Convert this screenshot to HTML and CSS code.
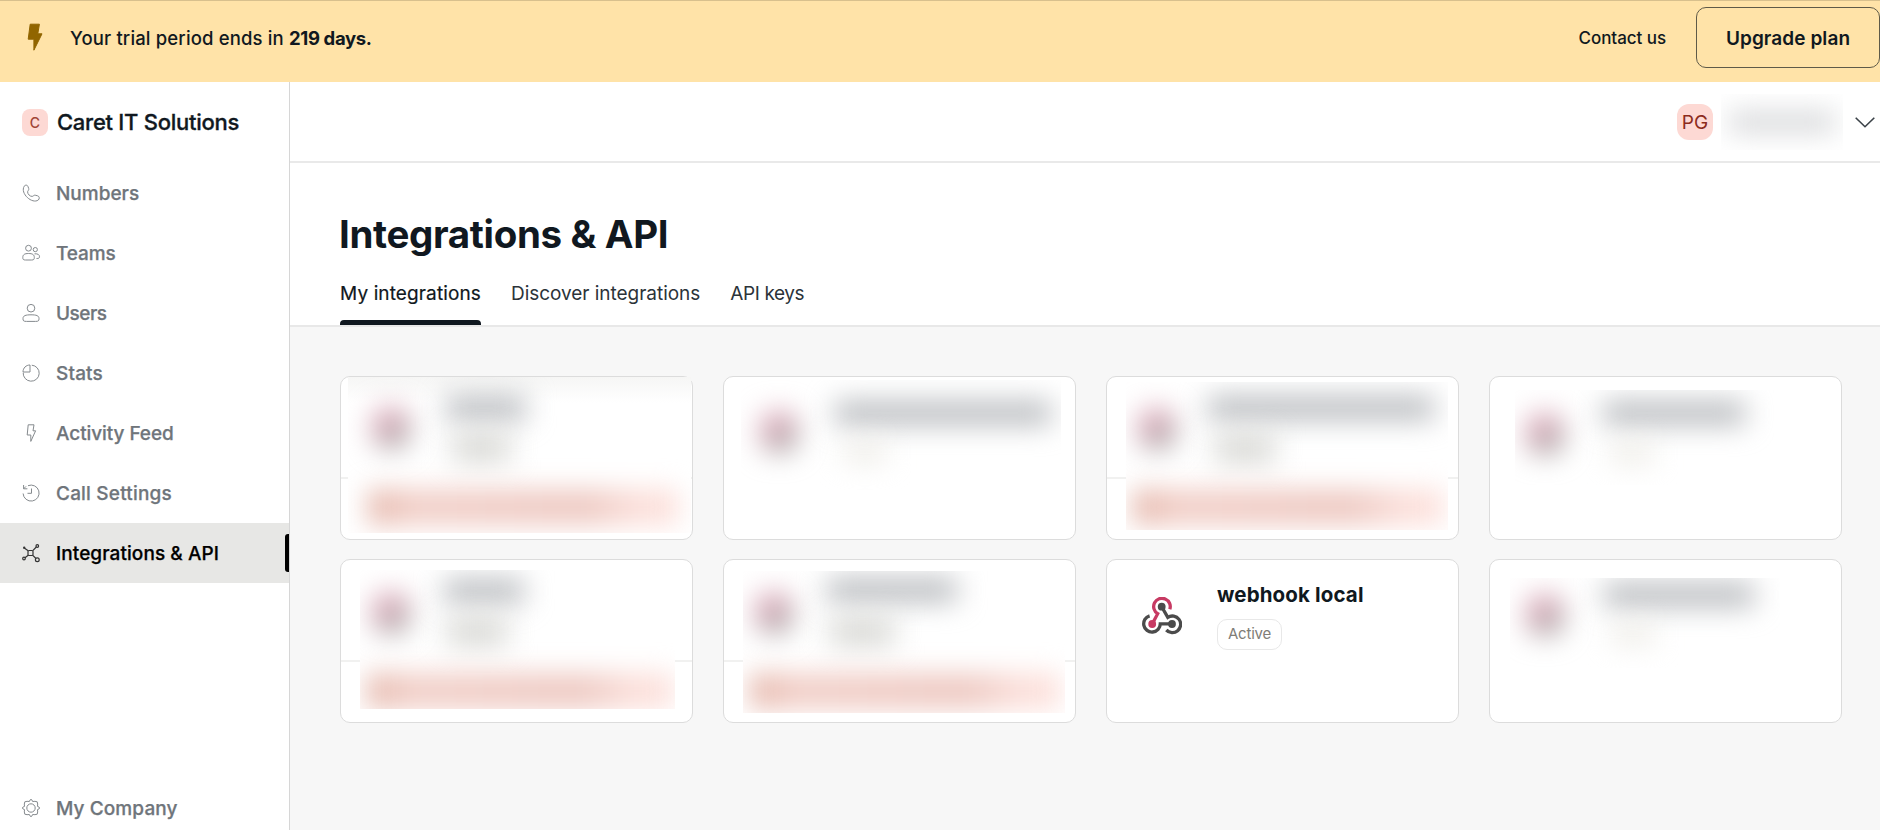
FILE: index.html
```html
<!DOCTYPE html>
<html lang="en">
<head>
<meta charset="utf-8">
<title>Integrations &amp; API</title>
<link rel="stylesheet" href="styles.css">
</head>
<body>
<div class="app">
  <div class="banner">
    <svg class="banner-icon" width="16" height="28" viewBox="0 0 16 28"><path d="M3.2 1.2h9.2l-1.6 9.6h4.2L6.9 27.2V16.2H1.2z" fill="#916500" stroke="#916500" stroke-width="1" stroke-linejoin="round"/></svg>
    <p class="banner-text">Your trial period ends in <strong>219 days.</strong></p>
    <a class="contact">Contact us</a>
    <button class="upgrade">Upgrade plan</button>
  </div>
  <div class="body">
    <aside class="sidebar">
      <div class="company"><span class="company-badge">C</span><span class="company-name">Caret IT Solutions</span></div>
      <nav class="nav">
        <a class="nav-item"><svg class="icon" viewBox="0 0 18 18"><path d="M2.200 2.200C3.400.6 5.400.8 6 2.600L6.700 4.500C7.200 6 5.700 6.700 5.600 7.800C5.500 10 8 12.600 10.200 12.400C11.400 12.300 11.800 10.900 13.200 11.200L15.600 11.800C17.700 12.400 17.700 14.800 16.300 16C10.400 20.500-2.200 9.500 2.200 2.200Z"/></svg>Numbers</a>
        <a class="nav-item teams"><svg class="icon" viewBox="0 0 18 18"><circle cx="6.500" cy="4.200" r="2.900"/><circle cx="13.300" cy="5.600" r="2.100"/><path d="M.8 13.500C.8 10.600 2.500 9.500 6.500 9.500S12.300 10.600 12.300 13.500C12.300 15.400 11.800 16 9.500 16H3.500C1.300 16 .8 15.400.8 13.500ZM12.500 9.800C16 9.600 17.500 10.700 17.500 12.800C17.500 14.200 16.700 14.500 14.500 14.500"/></svg>Teams</a>
        <a class="nav-item users"><svg class="icon" viewBox="0 0 18 18"><circle cx="9" cy="4.200" r="3.800"/><path d="M1 14.500C1 11.700 3.500 10.800 9 10.800S17 11.700 17 14.500C17 16.900 16.500 17.400 13.500 17.400H4.500C1.500 17.400 1 16.900 1 14.500Z"/></svg>Users</a>
        <a class="nav-item stats"><svg class="icon" viewBox="0 0 18 18"><path d="M9.800 1.200A8 8 0 1 1 1.200 8.700M8 1V8H1C1 4 4 1 8 1Z"/></svg>Stats</a>
        <a class="nav-item feed"><svg class="icon" viewBox="0 0 18 18"><path d="M6.200.8H12L11 6.800H13.600L8.800 17.400V11H5.200Z"/></svg>Activity Feed</a>
        <a class="nav-item settings"><svg class="icon" viewBox="0 0 18 18"><path d="M6 1.700A8 8 0 1 1 1.100 9.500M1.600 1V4.800H5.400M1.600 4.800L4 2.400M9.500 4.500V9.300H5.500"/></svg>Call Settings</a>
        <a class="nav-item active"><svg class="icon" viewBox="0 0 18 18"><rect x="6" y="6.500" width="5" height="5" rx="1"/><circle cx="15.300" cy="2" r="1.300"/><circle cx="15.300" cy="15.800" r="1.900"/><circle cx="2" cy="14.500" r="1.300"/><circle cx="2.200" cy="3.800" r=".6"/><path d="M2.600 4.200L6.200 6.800M14.300 3L10.800 6.700M6.200 11.300L3 13.700M10.800 11.300L14 14.500"/></svg>Integrations &amp; API</a>
      </nav>
      <a class="nav-item my-company"><svg class="icon" viewBox="0 0 18 18"><path d="M9 .3Q10 .5 10.600 2.500Q13 2 15.200 2.800Q16 5 15.500 7.400Q17.500 8 17.700 9Q17.500 10 15.500 10.600Q16 13 15.200 15.200Q13 16 10.600 15.500Q10 17.500 9 17.700Q8 17.500 7.400 15.500Q5 16 2.800 15.200Q2 13 2.500 10.600Q.5 10 .3 9Q.5 8 2.500 7.400Q2 5 2.800 2.800Q5 2 7.400 2.500Q8 .5 9 .3Z"/><circle cx="9" cy="9" r="4.200"/></svg>My Company</a>
    </aside>
    <main class="main">
      <header class="topbar">
        <span class="avatar">PG</span>
        <span class="user-name"><i class="smudge name"></i></span>
        <svg class="chevron" width="20" height="11" viewBox="0 0 20 11"><path d="M.7.700L10 9.700L19.300.700"/></svg>
      </header>
      <section class="heading">
        <h1>Integrations &amp; API</h1>
        <div class="tabs"><a class="tab selected">My integrations</a><a class="tab">Discover integrations</a><a class="tab keys">API keys</a></div>
      </section>
      <section class="cards">
        <article class="card split"><div class="mask c1"><i class="smudge logo"></i><i class="smudge name"></i><i class="smudge badge"></i><i class="smudge alert"></i></div></article>
        <article class="card"><div class="mask c2"><i class="smudge logo"></i><i class="smudge name"></i><i class="smudge badge faint"></i></div></article>
        <article class="card split"><div class="mask c3"><i class="smudge logo"></i><i class="smudge name"></i><i class="smudge badge"></i><i class="smudge alert"></i></div></article>
        <article class="card"><div class="mask c4"><i class="smudge logo"></i><i class="smudge name"></i><i class="smudge badge faint"></i></div></article>
        <article class="card split"><div class="mask c5"><i class="smudge logo"></i><i class="smudge name"></i><i class="smudge badge"></i><i class="smudge alert"></i></div></article>
        <article class="card split"><div class="mask c6"><i class="smudge logo"></i><i class="smudge name"></i><i class="smudge badge"></i><i class="smudge alert"></i></div></article>
        <article class="card open">
          <svg class="webhook" width="40" height="38" viewBox="0 0 40 38"><g fill="none" stroke-width="3.300"><path d="M27.800 12.300A8.300 8.300 0 1 0 15.700 16.700L10.200 27" stroke="#c73a63"/><path d="M7.600 18.800A8.300 8.300 0 1 0 18.300 26.800H30" stroke="#4b4b4b"/><path d="M19.700 9.700L25.800 20.400A8.300 8.300 0 1 1 24.300 33" stroke="#4b4b4b"/></g><circle cx="19.700" cy="9.700" r="3.900" fill="#4b4b4b"/><circle cx="10.200" cy="27" r="3.900" fill="#c73a63"/><circle cx="30" cy="27" r="3.900" fill="#4b4b4b"/></svg>
          <div class="info"><h2>webhook local</h2><span class="status">Active</span></div>
        </article>
        <article class="card"><div class="mask c8"><i class="smudge logo"></i><i class="smudge name"></i><i class="smudge badge faint"></i></div></article>
      </section>
    </main>
  </div>
</div>
</body>
</html>
```

FILE: styles.css
```css
* { box-sizing: border-box; }
body { margin: 0; font-family: Inter, "Liberation Sans", sans-serif; color: #101820; background: #fff; }
.app { display: flex; flex-direction: column; height: 830px; overflow: hidden; }

.banner { flex: none; display: flex; height: 82px; padding-top: 6px; border-top: 1px solid #d8c08d; background: #ffe3a8; }
.banner-icon { margin: 16px 0 0 27px; }
.banner-text { margin: 0 auto 0 27px; font-size: 18.5px; font-weight: 500; line-height: 62px; letter-spacing: .15px; white-space: nowrap; }
.banner-text strong { font-weight: 700; letter-spacing: -.35px; }
.contact { margin-right: 30px; font-size: 17px; font-weight: 500; line-height: 62px; letter-spacing: -.05px; }
.upgrade { width: 184px; height: 61px; padding: 1px 0 0; border: 1.500px solid #5f5a48; border-radius: 10px; background: none; color: inherit; font: 600 19px Inter, sans-serif; letter-spacing: .08px; }

.body { flex: 1; display: flex; min-height: 0; }
.sidebar { flex: none; display: flex; flex-direction: column; width: 290px; border-right: 1px solid #d6d6d6; }
.company { flex: none; display: flex; align-items: center; gap: 9px; height: 81px; padding: 0 0 1px 22px; font-size: 22px; font-weight: 500; letter-spacing: -.27px; }
.company-name { -webkit-text-stroke: .3px #101820; }
.company-badge { display: grid; place-items: center; width: 26px; height: 27px; border-radius: 8px; background: #fdd9d4; color: #a04436; font-size: 14px; letter-spacing: 0; }
.nav-item { position: relative; flex: none; display: flex; align-items: center; gap: 16px; height: 60px; padding-left: 22px; color: #6f757b; font-size: 19px; font-weight: 500; -webkit-text-stroke: .25px currentColor; letter-spacing: 0; white-space: nowrap; }
.teams { letter-spacing: -.1px; }
.users { letter-spacing: -.5px; }
.stats { letter-spacing: .15px; }
.feed { letter-spacing: -.08px; }
.settings { letter-spacing: .2px; }
.icon { flex: none; width: 18px; height: 18px; overflow: visible; fill: none; stroke: #858a8e; stroke-width: 1; stroke-linejoin: round; }
.active { background: #e7e7e5; color: #000; letter-spacing: .08px; }
.active .icon { stroke: #333; stroke-width: 1.200; }
.active::after { content: ""; position: absolute; top: 11px; right: 0; width: 4px; height: 38px; border-radius: 3px 0 0 3px; background: #000; }
.my-company { margin: auto 0 -8px; letter-spacing: .1px; }

.main { flex: 1; display: flex; flex-direction: column; min-width: 0; background: #f7f7f7; }
.topbar { flex: none; display: flex; align-items: center; height: 81px; padding: 1px 5px 0 0; justify-content: flex-end; border-bottom: 2px solid #e9e9e9; background: #fff; }
.avatar { display: grid; place-items: center; width: 36px; height: 36px; border-radius: 12px; background: #fdd9d4; color: #8c2c1c; font-size: 19px; margin-right: 8px; }
.user-name { position: relative; overflow: hidden; width: 122px; height: 56px; margin-right: 12px; background: #fff; }
.user-name .name { left: 8px; top: 16px; width: 106px; height: 24px; background: #dcdddf; filter: blur(13px); }
.chevron { fill: none; stroke: #3b4248; stroke-width: 1.600; }

.heading { flex: none; height: 164px; padding: 47px 0 0 50px; border-bottom: 2px solid #e8e8e8; background: #fff; }
h1 { margin: 0 0 0 -1px; font-size: 38.500px; font-weight: 700; line-height: 49px; letter-spacing: -.35px; }
.tabs { display: flex; gap: 30px; height: 68px; }
.tab { position: relative; height: 66px; font-size: 19px; line-height: 69px; letter-spacing: -.03px; color: #2b3339; }
.keys { letter-spacing: -.4px; }
.selected { color: #101820; letter-spacing: .12px; -webkit-text-stroke: .2px #101820; }
.selected::after { content: ""; position: absolute; left: 0; right: 0; bottom: 0; height: 5px; border-radius: 4px 4px 0 0; background: #101820; }

.cards { display: grid; grid-template-columns: repeat(4, 353px); grid-auto-rows: 164px; gap: 19px 30px; padding: 49px 0 0 50px; }
.card { position: relative; border: 1px solid #dcdcdc; border-radius: 10px; background: #fff; }
.split::before { content: ""; position: absolute; left: 0; right: 0; top: 100px; height: 2px; background: #f1f1f0; }
.open { display: flex; padding: 37px 0 0 35px; gap: 35px; }
.webhook { flex: none; }
.info { margin-top: -15px; }
h2 { margin: 0; font-size: 20.500px; font-weight: 700; line-height: 26px; letter-spacing: .14px; }
.status { display: block; width: 65px; height: 31px; margin-top: 11px; border: 1px solid #e8e8e8; border-radius: 10px; color: #7f7d77; font-size: 15px; line-height: 28px; text-align: center; letter-spacing: -.2px; }

.mask { position: absolute; overflow: hidden; background: #fff; }
.smudge { position: absolute; filter: blur(14px); }
.logo { width: 36px; height: 40px; border-radius: 14px; background: linear-gradient(145deg, #dba4b6 35%, #a3a09f 75%); }
.card .name { height: 22px; background: #b2b5b9; }
.badge { height: 27px; background: #d6d6d2; }
.faint { width: 42px; height: 18px; background: #ebe9e3; }
.alert { height: 36px; background: linear-gradient(90deg, #e5b8ac, #f2d0c9 15%, #eecac3 70%, #fce0db 88%); filter: blur(13px); }

.c1 { left: 7px; top: 0; width: 343px; height: 156px; background: linear-gradient(#f6f6f5, #fff 26px); }
.c1 .logo { left: 25px; top: 31px; }
.c1 .name { left: 98px; top: 20px; width: 80px; }
.c1 .badge { left: 104px; top: 57px; width: 58px; }
.c1 .alert { left: 20px; top: 112px; width: 310px; }
.c2 { left: 17px; top: 3px; width: 320px; height: 110px; }
.c2 .logo { left: 20px; top: 32px; }
.c2 .name { left: 94px; top: 22px; width: 216px; }
.c2 .faint { left: 103px; top: 63px; }
.c3 { left: 19px; top: 5px; width: 322px; height: 148px; }
.c3 .logo { left: 13px; top: 27px; }
.c3 .name { left: 82px; top: 15px; width: 226px; }
.c3 .badge { left: 89px; top: 53px; width: 60px; }
.c3 .alert { left: 7px; top: 107px; width: 310px; }
.c4 { left: 25px; top: 13px; width: 260px; height: 95px; }
.c4 .logo { left: 12px; top: 24px; }
.c4 .name { left: 88px; top: 12px; width: 142px; }
.c4 .faint { left: 96px; top: 54px; }
.c5 { left: 19px; top: 10px; width: 315px; height: 139px; }
.c5 .logo { left: 13px; top: 23px; }
.c5 .name { left: 84px; top: 10px; width: 80px; }
.c5 .badge { left: 87px; top: 48px; width: 60px; }
.c5 .alert { left: 7px; top: 103px; width: 306px; }
.c6 { left: 19px; top: 11px; width: 322px; height: 142px; }
.c6 .logo { left: 13px; top: 22px; }
.c6 .name { left: 84px; top: 8px; width: 130px; }
.c6 .badge { left: 87px; top: 47px; width: 64px; }
.c6 .alert { left: 7px; top: 102px; width: 310px; }
.c8 { left: 20px; top: 18px; width: 270px; height: 90px; }
.c8 .logo { left: 17px; top: 17px; }
.c8 .name { left: 94px; top: 6px; width: 150px; }
.c8 .faint { left: 102px; top: 47px; }
```
